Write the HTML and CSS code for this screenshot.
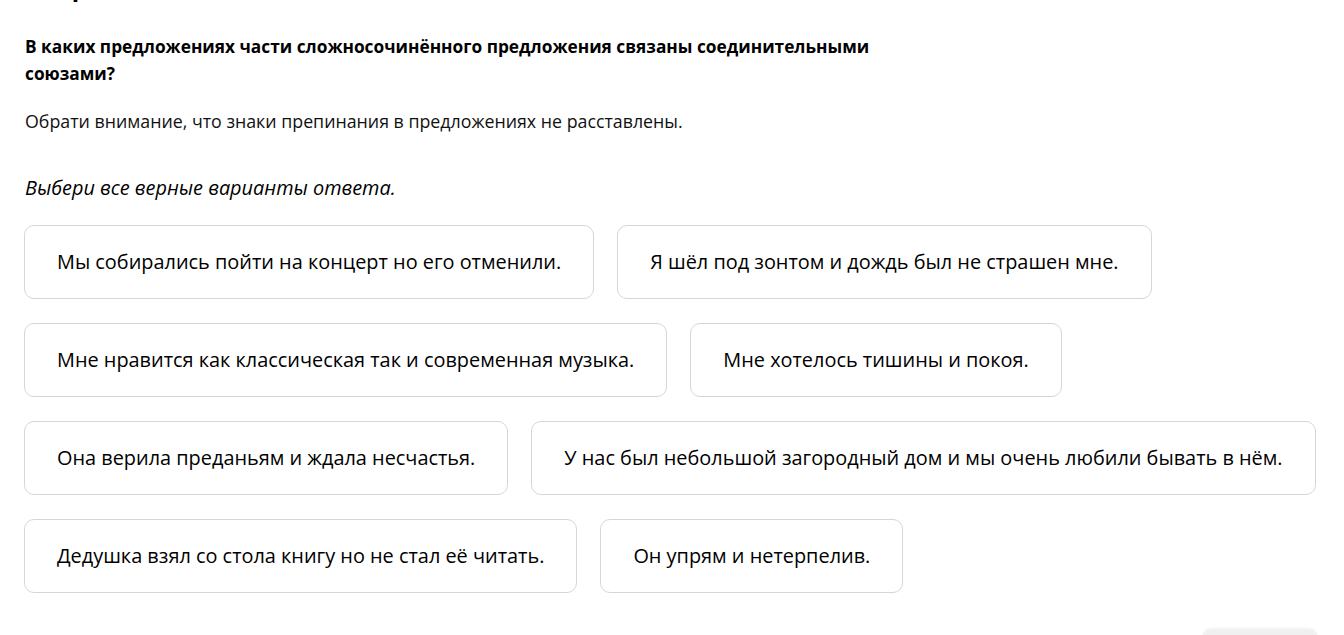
FILE: index.html
```html
<!DOCTYPE html>
<html lang="ru">
<head>
<meta charset="utf-8">
<link rel="stylesheet" href="styles.css">
</head>
<body>
<main class="page">
  <h2 class="title">Вопрос 3</h2>
  <p class="question">В каких предложениях части сложносочинённого предложения связаны соединительными союзами?</p>
  <p class="note">Обрати внимание, что знаки препинания в предложениях не расставлены.</p>
  <p class="hint">Выбери все верные варианты ответа.</p>
  <div class="options">
    <button class="option">Мы собирались пойти на концерт но его отменили.</button>
    <button class="option">Я шёл под зонтом и дождь был не страшен мне.</button>
    <button class="option">Мне нравится как классическая так и современная музыка.</button>
    <button class="option">Мне хотелось тишины и покоя.</button>
    <button class="option">Она верила преданьям и ждала несчастья.</button>
    <button class="option">У нас был небольшой загородный дом и мы очень любили бывать в нём.</button>
    <button class="option">Дедушка взял со стола книгу но не стал её читать.</button>
    <button class="option">Он упрям и нетерпелив.</button>
  </div>
  <div class="footer">
    <button class="submit">Ответить</button>
  </div>
</main>
</body>
</html>
```
FILE: styles.css
```css
html, body {
  margin: 0;
  padding: 0;
  background: #fff;
  overflow: hidden;
}
body {
  font-family: "Open Sans", "Noto Sans", sans-serif;
  color: #000;
}
.page {
  padding: 0 24px 0 24px;
  height: 635px;
  overflow: hidden;
}
.title {
  margin: -29px 0 0 1px;
  font-size: 24px;
  line-height: 32px;
  font-weight: 700;
}
.question {
  margin: 30px 0 0 1px;
  width: 880px;
  font-size: 17.3px;
  font-weight: 700;
  line-height: 27px;
}
.note {
  margin: 22px 0 0 1px;
  font-size: 17.8px;
  line-height: 24px;
  color: #111;
}
.hint {
  margin: 41px 0 0 1px;
  font-size: 19.9px;
  font-style: italic;
  line-height: 28px;
}
.options {
  margin-top: 23px;
  display: flex;
  flex-wrap: wrap;
  gap: 24px 23px;
}
.option {
  font-family: inherit;
  font-size: 19.9px;
  line-height: 28px;
  color: #000;
  background: #fff;
  border: 1px solid #d6d6d6;
  border-radius: 10px;
  padding: 22px 32px;
  cursor: pointer;
}
.footer {
  display: flex;
  justify-content: flex-end;
  margin-top: 36px;
  padding-right: 2px;
}
.submit {
  font-family: inherit;
  font-size: 16px;
  width: 116px;
  height: 44px;
  border: none;
  border-radius: 10px;
  background: #f0f0f0;
  color: #999;
  box-shadow: 0 -1px 3px rgba(0,0,0,0.05);
}
```
